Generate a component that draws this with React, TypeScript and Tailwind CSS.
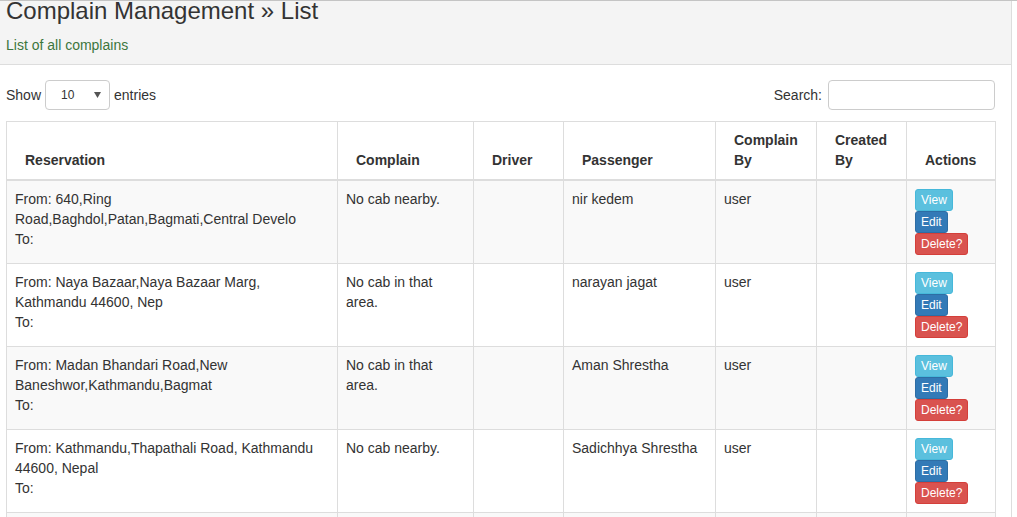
const rows = [
  {
    from: "640,Ring Road,Baghdol,Patan,Bagmati,Central Develo",
    complain: "No cab nearby.",
    passenger: "nir kedem",
    by: "user",
  },
  {
    from: "Naya Bazaar,Naya Bazaar Marg, Kathmandu 44600, Nep",
    complain: "No cab in that area.",
    passenger: "narayan jagat",
    by: "user",
  },
  {
    from: "Madan Bhandari Road,New Baneshwor,Kathmandu,Bagmat",
    complain: "No cab in that area.",
    passenger: "Aman Shrestha",
    by: "user",
  },
  {
    from: "Kathmandu,Thapathali Road, Kathmandu 44600, Nepal",
    complain: "No cab nearby.",
    passenger: "Sadichhya Shrestha",
    by: "user",
  },
  {
    from: "Lazimpat,Kathmandu,Bagmati,Central Development",
    complain: "Driver was late.",
    passenger: "Ram Karki",
    by: "user",
  },
]

const th = "border border-[#ddd] border-b-2 align-bottom text-left font-bold pl-[18px] pr-[8px] pt-[8px] pb-[9px]"
const td = "border border-[#ddd] align-top p-[8px]"

export default function App() {
  return (
    <div className="min-h-screen bg-white border-t border-[#c4c4c4] font-['Liberation_Sans',Arial,sans-serif] text-[14px] leading-[20px] text-[#333]">
      <div className="w-[1012px] min-h-[516px] border-r border-[#ddd]">
        <div className="h-[64px] bg-[#f4f4f4] border-b border-[#ddd] px-[6px] overflow-hidden">
          <h1 className="-mt-[3px] text-[24px] leading-[26px] font-normal text-[#333]">
            Complain Management » List
          </h1>
          <p className="mt-[11px] text-[14px] leading-[20px] text-[#3c763d]">List of all complains</p>
        </div>

        <div className="pl-[6px] pr-[16px]">
          <div className="mt-[15px] flex items-center justify-between h-[30px] w-[989px]">
            <div className="flex items-center">
              <span>Show</span>
              <div className="ml-[4px] w-[65px] h-[30px] border border-[#ccc] rounded-[4px] bg-white flex items-center justify-between pl-[15px] pr-[8px] text-[12px]">
                <span>10</span>
                <svg width="7" height="6" viewBox="0 0 7 6">
                  <path d="M0 0 L7 0 L3.5 6 Z" fill="#555" />
                </svg>
              </div>
              <span className="ml-[4px]">entries</span>
            </div>
            <div className="flex items-center">
              <span>Search:</span>
              <div className="ml-[6px] w-[167px] h-[30px] border border-[#ccc] rounded-[4px] bg-white" />
            </div>
          </div>

          <table className="mt-[11px] w-[989px] table-fixed border-collapse border border-[#ddd]">
            <colgroup>
              <col className="w-[331px]" />
              <col className="w-[136px]" />
              <col className="w-[90px]" />
              <col className="w-[152px]" />
              <col className="w-[101px]" />
              <col className="w-[90px]" />
              <col className="w-[89px]" />
            </colgroup>
            <thead>
              <tr>
                <th className={th}>Reservation</th>
                <th className={th}>Complain</th>
                <th className={th}>Driver</th>
                <th className={th}>Passenger</th>
                <th className={th}>
                  Complain
                  <br />
                  By
                </th>
                <th className={th}>
                  Created
                  <br />
                  By
                </th>
                <th className={th}>Actions</th>
              </tr>
            </thead>
            <tbody>
              {rows.map((r, i) => (
                <tr key={i} className={i % 2 === 0 ? "bg-[#f9f9f9]" : "bg-white"}>
                  <td className={td}>
                    From: {r.from}
                    <br />
                    To:
                  </td>
                  <td className={td}>{r.complain}</td>
                  <td className={td}></td>
                  <td className={td}>{r.passenger}</td>
                  <td className={td}>{r.by}</td>
                  <td className={td}></td>
                  <td className={td}>
                    <div className="flex flex-col items-start text-[12px] leading-[18px] text-white">
                      <span className="px-[5px] py-px border border-[#46b8da] bg-[#5bc0de] rounded-[3px]">View</span>
                      <span className="px-[5px] py-px border border-[#2e6da4] bg-[#337ab7] rounded-[3px]">Edit</span>
                      <span className="px-[5px] py-px border border-[#d43f3a] bg-[#d9534f] rounded-[3px]">Delete?</span>
                    </div>
                  </td>
                </tr>
              ))}
            </tbody>
          </table>
        </div>
      </div>
    </div>
  )
}
